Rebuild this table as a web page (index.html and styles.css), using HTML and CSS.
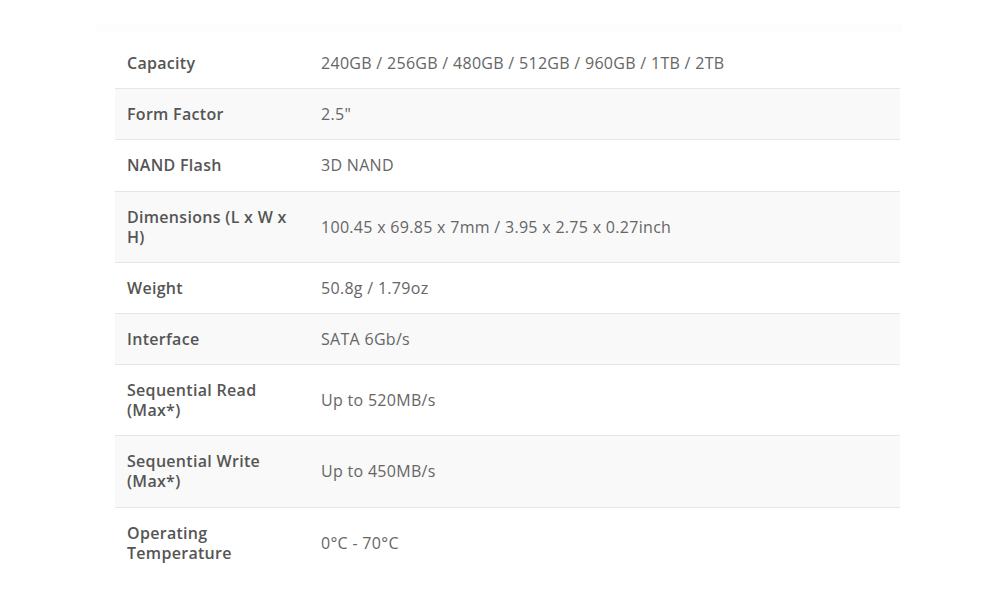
FILE: index.html
```html
<!DOCTYPE html>
<html>
<head>
<meta charset="utf-8">
<link rel="stylesheet" href="styles.css">
</head>
<body>
<div class="page">
  <div class="band"></div>
  <table class="specs">
    <tbody>
      <tr><th>Capacity</th><td>240GB / 256GB / 480GB / 512GB / 960GB / 1TB / 2TB</td></tr>
      <tr class="alt"><th>Form Factor</th><td>2.5"</td></tr>
      <tr><th>NAND Flash</th><td>3D NAND</td></tr>
      <tr class="alt"><th>Dimensions (L x W x H)</th><td>100.45 x 69.85 x 7mm / 3.95 x 2.75 x 0.27inch</td></tr>
      <tr><th>Weight</th><td>50.8g / 1.79oz</td></tr>
      <tr class="alt"><th>Interface</th><td>SATA 6Gb/s</td></tr>
      <tr><th>Sequential Read (Max*)</th><td>Up to 520MB/s</td></tr>
      <tr class="alt"><th>Sequential Write (Max*)</th><td>Up to 450MB/s</td></tr>
      <tr class="last"><th>Operating Temperature</th><td>0°C - 70°C</td></tr>
    </tbody>
  </table>
</div>
</body>
</html>
```
FILE: styles.css
```css
html, body {
  margin: 0;
  padding: 0;
  background: #ffffff;
}
.page {
  width: 1000px;
  height: 600px;
  padding-top: 23px;
  box-sizing: border-box;
  font-family: "Open Sans", "Liberation Sans", sans-serif;
}
.band {
  margin-left: 96px;
  width: 807px;
  height: 9px;
  background: #fdfdfd;
  margin-bottom: 6px;
}
.specs {
  margin-left: 115px;
  width: 785px;
  border-collapse: collapse;
  font-size: 16px;
  line-height: 20px;
}
.specs th,
.specs td {
  padding: 15.1px 12px;
  text-align: left;
  vertical-align: middle;
  border-bottom: 1px solid #e6e6e6;
}
.specs .last th,
.specs .last td {
  border-bottom: none;
}
.specs th {
  width: 170px;
  font-weight: 600;
  letter-spacing: 0.3px;
  color: #555555;
}
.specs td {
  font-weight: 400;
  letter-spacing: 0.3px;
  color: #666666;
}
.specs .alt {
  background: #f9f9f9;
}
```
